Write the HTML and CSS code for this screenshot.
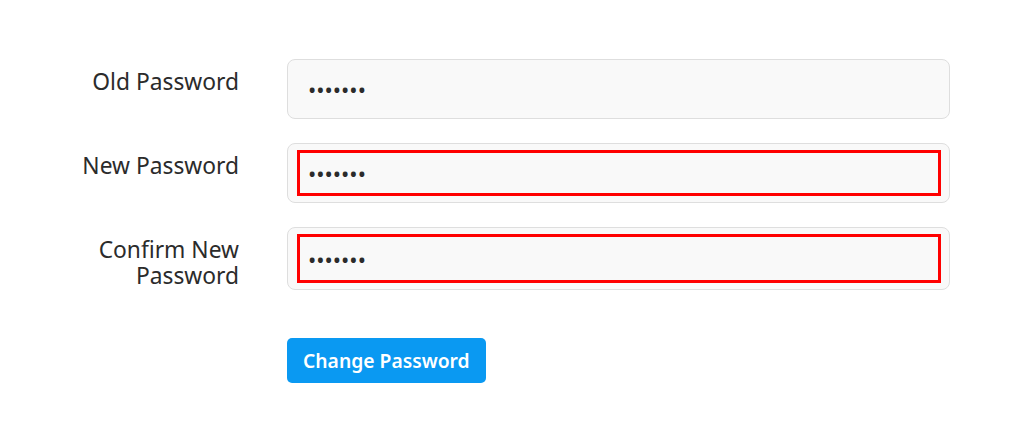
FILE: index.html
```html
<!DOCTYPE html>
<html lang="en">
<head>
<meta charset="utf-8">
<title>Change Password</title>
<link rel="stylesheet" href="styles.css">
</head>
<body>
<form class="pw-form">
  <label class="pw-label" for="old">Old Password</label>
  <div class="pw-field">
    <input class="pw-input" id="old" type="password" value="1234567">
  </div>

  <label class="pw-label" for="new">New Password</label>
  <div class="pw-field">
    <input class="pw-input pw-input--invalid" id="new" type="password" value="1234567">
  </div>

  <label class="pw-label" for="confirm">Confirm New<br>Password</label>
  <div class="pw-field">
    <input class="pw-input pw-input--invalid" id="confirm" type="password" value="1234567">
  </div>

  <div class="pw-actions">
    <button class="pw-button" type="button">Change Password</button>
  </div>
</form>
</body>
</html>
```
FILE: styles.css
```css
html, body {
  margin: 0;
  padding: 0;
  background: #ffffff;
}

body {
  font-family: "Noto Sans", "Open Sans", sans-serif;
  color: #2b2b2b;
}

.pw-form {
  display: grid;
  grid-template-columns: 239px 663px;
  column-gap: 48px;
  row-gap: 24px;
  padding-top: 59px;
}

.pw-label {
  text-align: right;
  font-size: 22.8px;
  line-height: 26px;
  padding: 10px 0 1px;
  color: #2b2b2b;
}

.pw-field {
  display: flex;
  box-sizing: border-box;
  min-height: 60px;
  padding: 6px 8px 6px 9px;
  border: 1px solid #dedede;
  border-radius: 8px;
  background: #f9f9f9;
}

.pw-input {
  flex: 1;
  box-sizing: border-box;
  min-height: 46px;
  margin: 0;
  padding: 0 8px;
  border: 3px solid transparent;
  background: transparent;
  font-family: "Noto Sans", sans-serif;
  font-size: 22px;
  color: #2b2b2b;
  outline: none;
}

.pw-input--invalid {
  border-color: #ff0000;
}

.pw-actions {
  grid-column: 2;
  margin-top: 24px;
}

.pw-button {
  height: 45px;
  padding: 0 16px;
  border: none;
  border-radius: 5px;
  background: #0a99f2;
  color: #ffffff;
  font-family: "Noto Sans", sans-serif;
  font-size: 19.3px;
  font-weight: 600;
  cursor: pointer;
}
```
